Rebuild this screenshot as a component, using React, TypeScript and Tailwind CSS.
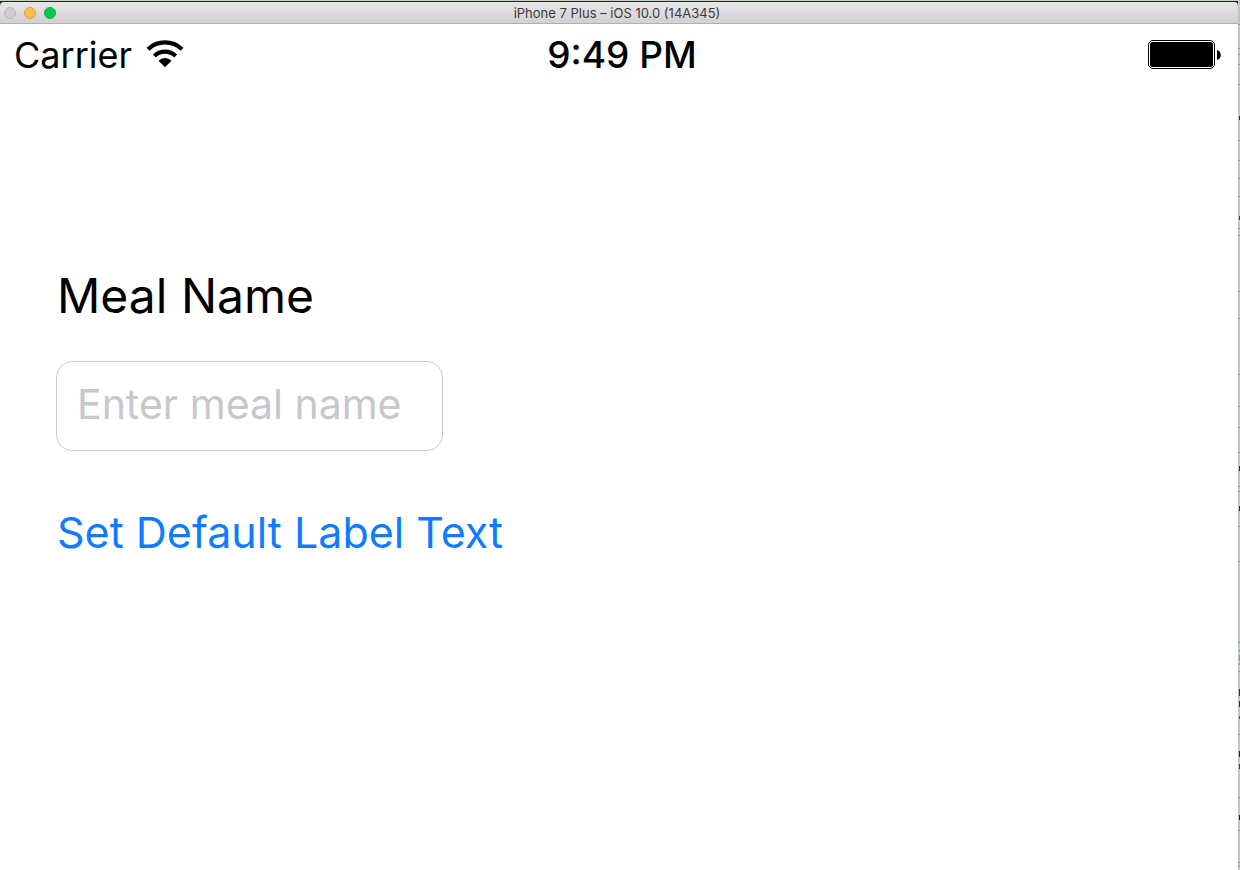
import React from "react";

const DESKTOP_MARKS = [
  { y: 24 }, { y: 48 }, { y: 54 }, { y: 64 }, { y: 84 }, { y: 116, h: 4, fill: "#30303a" },
  { y: 140 }, { y: 160 }, { y: 178 }, { y: 196 }, { y: 216, h: 4, fill: "#404058" }, { y: 228 },
  { y: 235 }, { y: 291 }, { y: 318 }, { y: 374 }, { y: 406 }, { y: 427 }, { y: 452 },
  { y: 466, h: 5, fill: "#33211f" }, { y: 486 }, { y: 491 }, { y: 506, h: 5, fill: "#33211f" },
  { y: 526 }, { y: 561 }, { y: 642 }, { y: 650, h: 2, fill: "#6c9bd0" }, { y: 655, h: 6, fill: "#6c9bd0" },
  { y: 663, h: 2, fill: "#6c9bd0" }, { y: 671 }, { y: 689, h: 7, fill: "#333333" },
  { y: 701, h: 6, fill: "#333333" }, { y: 716, h: 3, fill: "#555555" }, { y: 734 },
  { y: 751, h: 6, fill: "#222222" }, { y: 764, h: 5, fill: "#444444" }, { y: 797 },
  { y: 815, h: 5, fill: "#222222" }, { y: 830 }, { y: 862 }, { y: 866 },
];

function TitleBar() {
  return (
    <header className="grid h-[22px] grid-cols-[1fr_auto_1fr] items-center rounded-t border-b border-[#b1afb1] bg-linear-to-b from-[#e9e6e9] to-[#d2d0d2] pr-2 pl-1">
      <div className="flex gap-2">
        <button aria-label="Close" className="size-3 rounded-full border border-[#bab8ba] bg-[#cfcdcf]" />
        <button aria-label="Minimize" className="size-3 rounded-full border border-[#e0a03c] bg-[#fdbc4b]" />
        <button aria-label="Zoom" className="size-3 rounded-full border border-[#12ac48] bg-[#05cb56]" />
      </div>
      <h1 className="text-[13px] leading-5 text-[#3d3c3d]">iPhone 7 Plus – iOS 10.0 (14A345)</h1>
    </header>
  );
}

function WifiIcon() {
  return (
    <svg viewBox="0 0 38 28" className="h-7 w-[38px] overflow-visible" aria-hidden="true">
      <path d="M2 8.200A24.500 24.500 0 0 1 36 8.200" fill="none" stroke="black" strokeWidth="4.200" />
      <path d="M8.300 14.900A15.500 15.500 0 0 1 29.700 14.900" fill="none" stroke="black" strokeWidth="4.200" />
      <path d="M12.500 19.800A9.200 9.200 0 0 1 25.500 19.800L19 26.300Z" />
    </svg>
  );
}

function BatteryIcon() {
  return (
    <svg viewBox="0 0 74 30" className="h-[30px] w-[74px]" role="img" aria-label="Battery full">
      <rect x="0.500" y="0.500" width="66" height="28" rx="4.500" fill="white" stroke="black" />
      <rect x="2" y="2" width="63" height="25" rx="2.500" />
      <path d="M69 10C74 11 74 19 69 20Z" />
    </svg>
  );
}

function StatusBar() {
  return (
    <div className="grid grid-cols-[1fr_auto_1fr] items-center pt-[7px] pr-2 pl-[14px] text-4xl leading-[48px]">
      <div className="flex items-center gap-[14px]">
        <span>Carrier</span>
        <WifiIcon />
      </div>
      <time className="text-[37px] font-medium">9:49 PM</time>
      <div className="flex justify-end pr-2">
        <BatteryIcon />
      </div>
    </div>
  );
}

export default function App() {
  return (
    <div className="flex min-h-screen bg-[#c4c4c4] font-['Inter','Liberation_Sans',sans-serif] text-black">
      <div className="flex min-w-0 flex-1 flex-col border-t border-[#c5cdbc] bg-[#1f2a22] pt-px">
        <TitleBar />
        <main className="flex-1 bg-white">
          <StatusBar />
          <form className="flex flex-col items-start pt-[185px] pl-14" onSubmit={(e) => e.preventDefault()}>
            <label htmlFor="meal" className="px-px text-5xl leading-[64px]">Meal Name</label>
            <input
              id="meal"
              placeholder="Enter meal name"
              className="mt-[33px] h-[90px] w-[387px] rounded-2xl border border-[#cccccc] px-5 pb-1 text-[41px] outline-none placeholder:text-[#c7c7cd]"
            />
            <button type="button" className="mt-[53px] px-px text-[43px] leading-[56px] text-[#0f7cff]">
              Set Default Label Text
            </button>
          </form>
        </main>
      </div>
      <svg className="w-[2px] self-stretch" aria-hidden="true">
        {DESKTOP_MARKS.map(({ y, h = 1, fill = "#969696" }) => (
          <rect key={y} x={h > 1 ? 1 : 0} y={y} width="2" height={h} fill={fill} />
        ))}
      </svg>
    </div>
  );
}
